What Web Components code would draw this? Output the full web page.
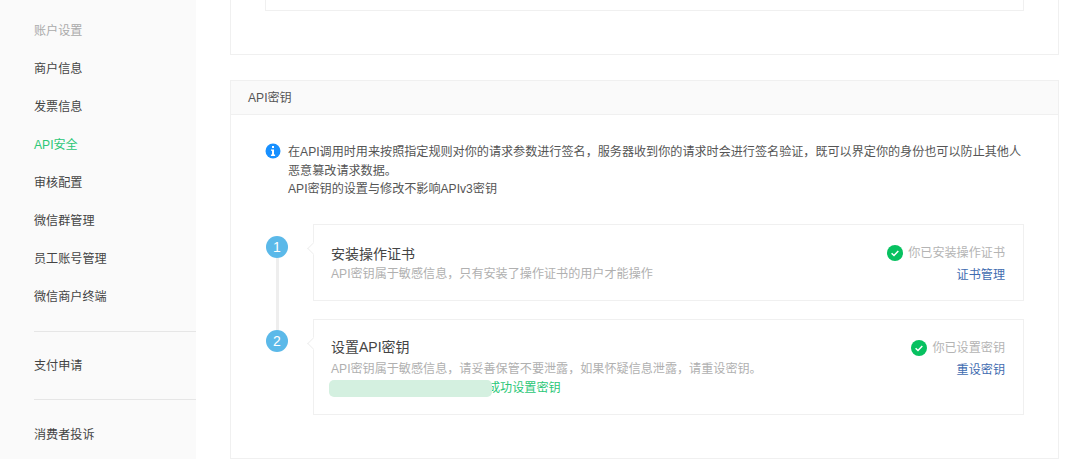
<!DOCTYPE html>
<html lang="zh-CN">
<head>
<meta charset="utf-8">
<title>API安全</title>
<style>
html, body {
  margin: 0;
  height: 459px;
  overflow: hidden;
  background: #fff;
  font: 12.1px/18px "Liberation Sans", "Noto Sans CJK SC", sans-serif;
  color: #444;
}
</style>
</head>
<body>
<account-page>
  <side-nav slot="nav">
    <nav-item kind="head">账户设置</nav-item>
    <nav-item>商户信息</nav-item>
    <nav-item>发票信息</nav-item>
    <nav-item kind="active">API安全</nav-item>
    <nav-item>审核配置</nav-item>
    <nav-item>微信群管理</nav-item>
    <nav-item>员工账号管理</nav-item>
    <nav-item>微信商户终端</nav-item>
    <nav-rule></nav-rule>
    <nav-item>支付申请</nav-item>
    <nav-rule style="margin: 14px 0 16px"></nav-rule>
    <nav-item>消费者投诉</nav-item>
  </side-nav>

  <cut-panel></cut-panel>

  <key-panel heading="API密钥">
    <info-note>在API调用时用来按照指定规则对你的请求参数进行签名，服务器收到你的请求时会进行签名验证，既可以界定你的身份也可以防止其他人<br>恶意篡改请求数据。<br>API密钥的设置与修改不影响APIv3密钥</info-note>

    <step-item number="1" heading="安装操作证书" status="你已安装操作证书" action="证书管理" line>
      API密钥属于敏感信息，只有安装了操作证书的用户才能操作
    </step-item>

    <step-item number="2" heading="设置API密钥" status="你已设置密钥" action="重设密钥" tall>
      API密钥属于敏感信息，请妥善保管不要泄露，如果怀疑信息泄露，请重设密钥。
      <masked-note slot="extra">成功设置密钥</masked-note>
    </step-item>
  </key-panel>
</account-page>

<script>
class AccountPage extends HTMLElement {
  constructor() {
    super();
    this.attachShadow({ mode: 'open' }).innerHTML = `
<style>
:host { display: flex; height: 459px; overflow: hidden; }
.main { flex: 1; min-width: 0; padding: 0 21px 0 34px; }
</style>
<slot name="nav"></slot>
<div class="main"><slot></slot></div>`;
  }
}
customElements.define('account-page', AccountPage);

class SideNav extends HTMLElement {
  constructor() {
    super();
    this.attachShadow({ mode: 'open' }).innerHTML = `
<style>
:host {
  display: block;
  flex: none;
  box-sizing: border-box;
  width: 196px;
  height: 459px;
  padding: 12px 0 0 34px;
  background: #fafafa;
}
</style>
<slot></slot>`;
  }
}
customElements.define('side-nav', SideNav);

class NavItem extends HTMLElement {
  constructor() {
    super();
    this.attachShadow({ mode: 'open' }).innerHTML = `
<style>
:host { display: block; height: 38px; line-height: 38px; color: #444; white-space: nowrap; }
:host([kind="head"]) { color: #aaa; }
:host([kind="active"]) { color: #2bc777; }
</style>
<slot></slot>`;
  }
}
customElements.define('nav-item', NavItem);

class NavRule extends HTMLElement {
  constructor() {
    super();
    this.attachShadow({ mode: 'open' }).innerHTML = `
<style>
:host { display: block; height: 1px; margin: 15px 0; background: #e6e6e6; }
</style>`;
  }
}
customElements.define('nav-rule', NavRule);

// the panel above is scrolled off, only its lower edge is left
class CutPanel extends HTMLElement {
  constructor() {
    super();
    this.attachShadow({ mode: 'open' }).innerHTML = `
<style>
:host {
  display: block;
  box-sizing: border-box;
  height: 55px;
  padding: 0 34px;
  border: solid #f0f0f0;
  border-width: 0 1px 1px;
}
div { height: 10px; border: solid #f0f0f0; border-width: 0 1px 1px; }
</style>
<div></div>`;
  }
}
customElements.define('cut-panel', CutPanel);

class KeyPanel extends HTMLElement {
  constructor() {
    super();
    this.attachShadow({ mode: 'open' }).innerHTML = `
<style>
:host {
  display: block;
  box-sizing: border-box;
  height: 379px;
  margin-top: 25px;
  border: 1px solid #f0f0f0;
}
header {
  height: 32px;
  padding: 1px 0 0 17px;
  line-height: 33px;
  color: #555;
  background: #fafafa;
  border-bottom: 1px solid #f0f0f0;
}
.body { display: flex; flex-direction: column; padding: 28px 34px 0; }
</style>
<header></header>
<div class="body"><slot></slot></div>`;
    this.shadowRoot.querySelector('header').textContent = this.getAttribute('heading');
  }
}
customElements.define('key-panel', KeyPanel);

class InfoNote extends HTMLElement {
  constructor() {
    super();
    this.attachShadow({ mode: 'open' }).innerHTML = `
<style>
:host { display: flex; gap: 7px; margin-bottom: 25px; line-height: 18.5px; color: #555; white-space: nowrap; }
svg { flex: none; width: 16px; height: 16px; }
</style>
<svg viewBox="0 0 16 16"><circle cx="8" cy="8" r="7.5" fill="#1890ff"/><rect x="7" y="3" width="2" height="2" fill="#fff"/><path d="M6 6.4h3v5.2h1.1V13H5.9v-1.4H7V7.7H6z" fill="#fff"/></svg>
<div><slot></slot></div>`;
  }
}
customElements.define('info-note', InfoNote);

class StepItem extends HTMLElement {
  constructor() {
    super();
    this.attachShadow({ mode: 'open' }).innerHTML = `
<style>
:host { display: flex; margin-bottom: 18px; }
.rail { flex: none; display: flex; flex-direction: column; align-items: center; width: 24px; margin-right: 24px; padding-top: 12px; }
:host([tall]) .rail { padding-top: 11px; }
.dot {
  flex: none;
  width: 22px;
  height: 22px;
  border-radius: 50%;
  background: #5bb9e9;
  color: #fff;
  font-size: 14px;
  line-height: 22px;
  text-align: center;
}
.line { flex: 1; width: 3px; margin-bottom: -30px; background: #eee; }
.card {
  flex: 1;
  position: relative;
  box-sizing: border-box;
  height: 77px;
  display: flex;
  justify-content: space-between;
  padding: 19px 18px 0 17px;
  border: 1px solid #f0f0f0;
}
:host([tall]) .card { height: 96px; padding-top: 17px; }
/* little notch on the left edge, pointing at the dot */
.card::before {
  content: "";
  position: absolute;
  left: -5px;
  top: 19px;
  width: 8px;
  height: 8px;
  background: #fff;
  border: solid #f0f0f0;
  border-width: 0 0 1px 1px;
  transform: rotate(45deg);
}
h3 { margin: 0 0 1px; font-size: 14px; font-weight: normal; line-height: 20px; color: #444; }
:host([tall]) h3 { margin-bottom: 3px; }
.sub { color: #b0b0b0; line-height: 19px; white-space: nowrap; }
.side { display: flex; flex-direction: column; align-items: flex-end; }
.status { display: flex; align-items: center; gap: 5px; line-height: 18px; color: #b4b4b4; white-space: nowrap; }
:host([tall]) .status { margin-top: 2px; }
.status svg { width: 16px; height: 16px; }
a { margin-top: 4px; color: #3f6cb0; line-height: 18px; text-decoration: none; }
</style>
<div class="rail"><div class="dot"></div></div>
<div class="card">
  <div>
    <h3></h3>
    <div class="sub"><slot></slot></div>
    <slot name="extra"></slot>
  </div>
  <div class="side">
    <div class="status">
      <svg viewBox="0 0 16 16"><circle cx="8" cy="8" r="8" fill="#07c160"/><path d="M4.6 8.2l2.4 2.3 4.3-4.6" fill="none" stroke="#fff" stroke-width="1.5"/></svg>
      <span class="status-text"></span>
    </div>
    <a href="#"></a>
  </div>
</div>`;
    const root = this.shadowRoot;
    root.querySelector('.dot').textContent = this.getAttribute('number');
    root.querySelector('h3').textContent = this.getAttribute('heading');
    root.querySelector('.status-text').textContent = this.getAttribute('status');
    root.querySelector('a').textContent = this.getAttribute('action');
    if (this.hasAttribute('line')) {
      const line = document.createElement('div');
      line.className = 'line';
      root.querySelector('.rail').appendChild(line);
    }
  }
}
customElements.define('step-item', StepItem);

// success line, the start of it is painted over in the screenshot
class MaskedNote extends HTMLElement {
  constructor() {
    super();
    this.attachShadow({ mode: 'open' }).innerHTML = `
<style>
:host { display: block; position: relative; padding-left: 157px; line-height: 19px; color: #2bc777; white-space: nowrap; }
i { position: absolute; left: -2px; top: 1px; width: 163px; height: 17px; border-radius: 5px; background: #d4f0e0; }
</style>
<slot></slot><i></i>`;
  }
}
customElements.define('masked-note', MaskedNote);
</script>
</body>
</html>
